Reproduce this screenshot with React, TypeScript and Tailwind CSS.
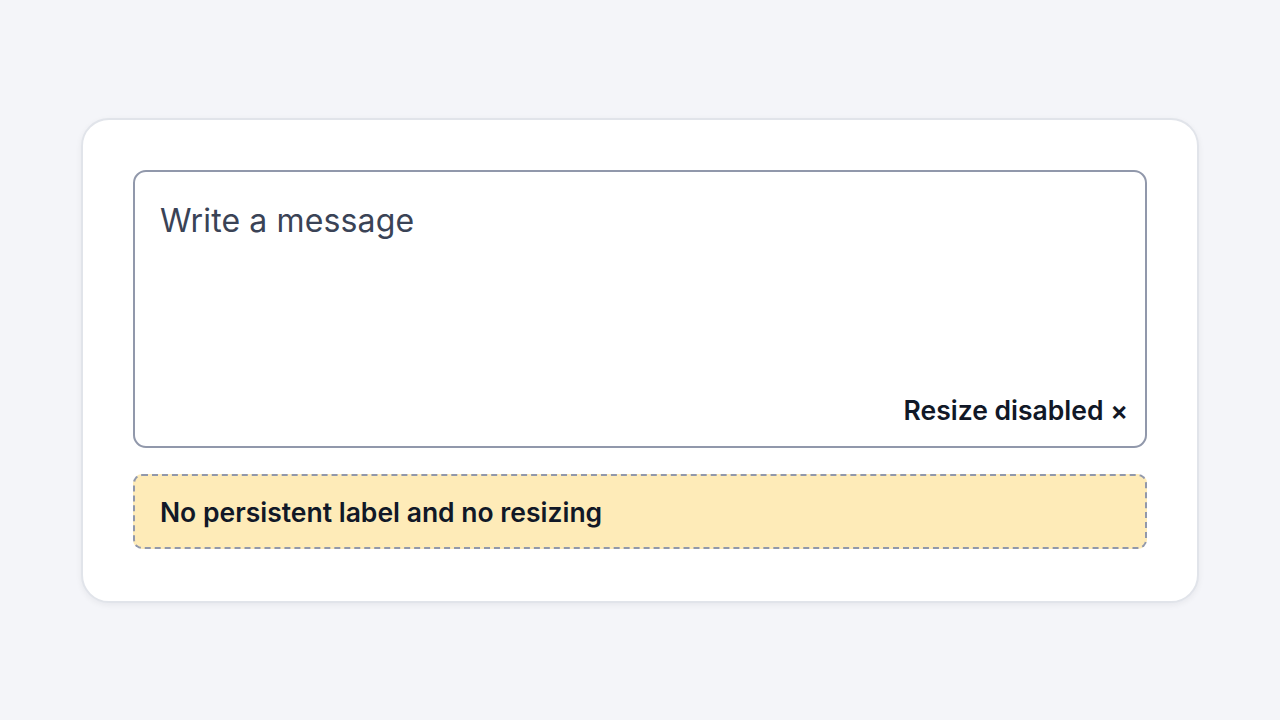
export default function App() {
  return (
    <div
      className="min-h-screen w-full bg-[#f4f5f9] flex items-center justify-center"
      style={{ fontFamily: "Inter, 'Noto Sans', sans-serif" }}
    >
      <div className="w-[1118px] bg-white rounded-[28px] border-2 border-[#e1e4ea] shadow-[0_2px_6px_rgba(15,23,42,0.06)] pl-[50px] pr-[50px] pt-[50px] pb-[52px] flex flex-col gap-[26px]">
        <div className="h-[278px] shrink-0 rounded-[13px] border-2 border-[#9198ab] flex flex-col justify-between pl-[25px] pr-[17px] pt-[29px] pb-[20px]">
          <p className="text-[32px] leading-[40px] text-[#3a4356] tracking-[0.004em]">
            Write a message
          </p>
          <div className="self-end text-[26.5px] leading-[32px] font-semibold text-[#111827]">
            Resize disabled ×
          </div>
        </div>
        <div className="h-[75px] shrink-0 rounded-[9px] border-2 border-dashed border-[#9198ab] bg-[#feebb8] flex items-center px-[25px] pt-[3px]">
          <p className="text-[26.5px] font-semibold text-[#111827]">
            No persistent label and no resizing
          </p>
        </div>
      </div>
    </div>
  );
}
